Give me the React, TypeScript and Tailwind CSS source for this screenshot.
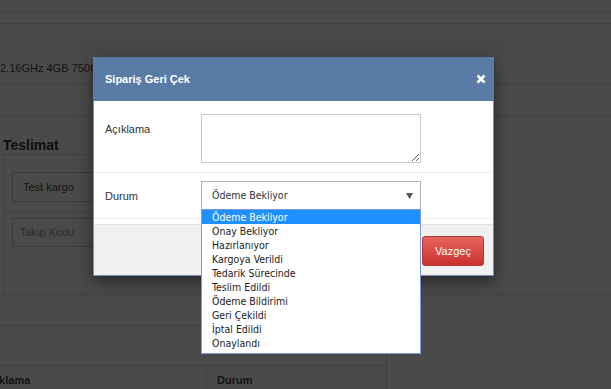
import React from "react";

const statuses = [
  "Ödeme Bekliyor",
  "Onay Bekliyor",
  "Hazırlanıyor",
  "Kargoya Verildi",
  "Tedarik Sürecinde",
  "Teslim Edildi",
  "Ödeme Bildirimi",
  "Geri Çekildi",
  "İptal Edildi",
  "Onaylandı",
];

export default function App() {
  return (
    <div className="relative h-[389px] w-[611px] overflow-hidden bg-white font-['Liberation_Sans',Arial,sans-serif] text-[11px] text-[#333]">
      {/* Page behind the modal */}
      <div className="h-[12px] border-b border-[#ddd]" />
      <div className="h-[12px] border-b border-[#ddd]" />
      <div className="h-[29px] bg-[#f9f9f9]" />
      <div className="flex h-[31px] items-center whitespace-nowrap border-b border-[#ddd] text-[#444]">
        2.16GHz 4GB 750GB 15.6" Notebook
      </div>
      <div className="h-[32px] border-b border-[#ddd]" />

      {/* Teslimat */}
      <div className="h-[179px] border-b border-[#ddd]">
        <div className="w-[470px]">
          <div className="h-[39px] border-b border-[#ddd] pl-[3px] pt-[21px]">
            <h3 className="text-[14px] font-bold leading-[16px]">Teslimat</h3>
          </div>
          <div className="ml-[4px] h-[139px] border-l border-[#ddd]">
            <div className="h-[57px] border-b border-[#ddd] pl-[7px] pt-[17px]">
              <div className="flex h-[30px] w-[220px] items-center border border-[#ccc] pl-[10px] text-[#444]">
                Test kargo
              </div>
            </div>
            <div className="pl-[7px] pt-[6px]">
              <div className="flex h-[29px] w-[220px] items-center border border-[#ccc] pl-[7px] text-[#999]">
                Takip Kodu
              </div>
            </div>
          </div>
        </div>
      </div>

      {/* Order lines table */}
      <div className="-ml-[28px] w-[415px]">
        <div className="h-[31px] border-b border-[#ddd]" />
        <div className="h-[63px] border-r border-[#ddd]">
          <div className="h-[39px]" />
          <div className="flex h-[30px] border-t border-[#ddd] font-bold leading-[16px] text-[#444]">
            <div className="w-[235px] border-r border-[#ddd] pl-[10px] pt-[6px]">Açıklama</div>
            <div className="pl-[10px] pt-[6px]">Durum</div>
          </div>
        </div>
      </div>

      {/* Modal */}
      <div className="absolute inset-0 bg-[rgba(0,0,0,0.71)] pl-[93px] pt-[57px]">
        <div className="relative w-[401px] border border-[#7d8fb0] bg-white shadow-[0_5px_15px_rgba(0,0,0,0.5)]">
          <div className="-mx-px -mt-px flex h-[44px] items-center justify-between rounded-t-[2px] bg-[#5a7ba6] pl-[12px] pr-[8px]">
            <h4 className="text-[11px] font-bold text-white">Sipariş Geri Çek</h4>
            <svg width="10" height="10" viewBox="0 0 10 10" className="text-white">
              <path d="M1.5 1.5 L8.5 8.5 M8.5 1.5 L1.5 8.5" stroke="currentColor" strokeWidth="2.6" />
            </svg>
          </div>

          <div className="flex border-b border-[#eee] pb-[9px] pl-[11px] pt-[13px]">
            <label className="w-[96px] pt-[7px] leading-[16px]">Açıklama</label>
            <textarea className="h-[49px] w-[220px] border border-[#c3cad4] bg-white outline-none" />
          </div>

          <div className="flex border-b border-[#eee] pb-[8px] pl-[11px] pt-[8px]">
            <label className="w-[96px] pt-[7px] leading-[16px]">Durum</label>
            <div className="relative">
              <div className="flex h-[29px] w-[220px] items-center justify-between border border-[#aab4c3] pl-[10px] pr-[7px] font-['DejaVu_Sans_Condensed','DejaVu_Sans',sans-serif] text-[10.5px] text-[#333]">
                <span>Ödeme Bekliyor</span>
                <svg width="7" height="6" viewBox="0 0 7 6">
                  <path d="M0 0 H7 L3.5 6 Z" fill="#555" />
                </svg>
              </div>
              <ul className="absolute left-0 top-[28px] z-10 w-[220px] border border-[#7a9bd4] bg-white pb-[3px] font-['DejaVu_Sans_Condensed','DejaVu_Sans',sans-serif] text-[10.5px] text-[#222]">
                {statuses.map((s, i) => (
                  <li
                    key={s}
                    className={
                      i === 0
                        ? "h-[14px] whitespace-nowrap bg-[#1e90ff] pl-[10px] leading-[14px] text-white"
                        : "h-[14px] whitespace-nowrap pl-[10px] leading-[14px]"
                    }
                  >
                    {s}
                  </li>
                ))}
              </ul>
            </div>
          </div>

          <div className="h-[5px]" />

          <div className="flex justify-end border-t border-[#dde3ea] bg-[#f1f1f1] pb-[9px] pr-[9px] pt-[11px]">
            <button className="h-[30px] w-[62px] rounded-[3px] border border-[#b33a36] bg-linear-to-b from-[#e8635e] to-[#c9302c] text-[11px] text-white">
              Vazgeç
            </button>
          </div>
        </div>
      </div>
    </div>
  );
}
